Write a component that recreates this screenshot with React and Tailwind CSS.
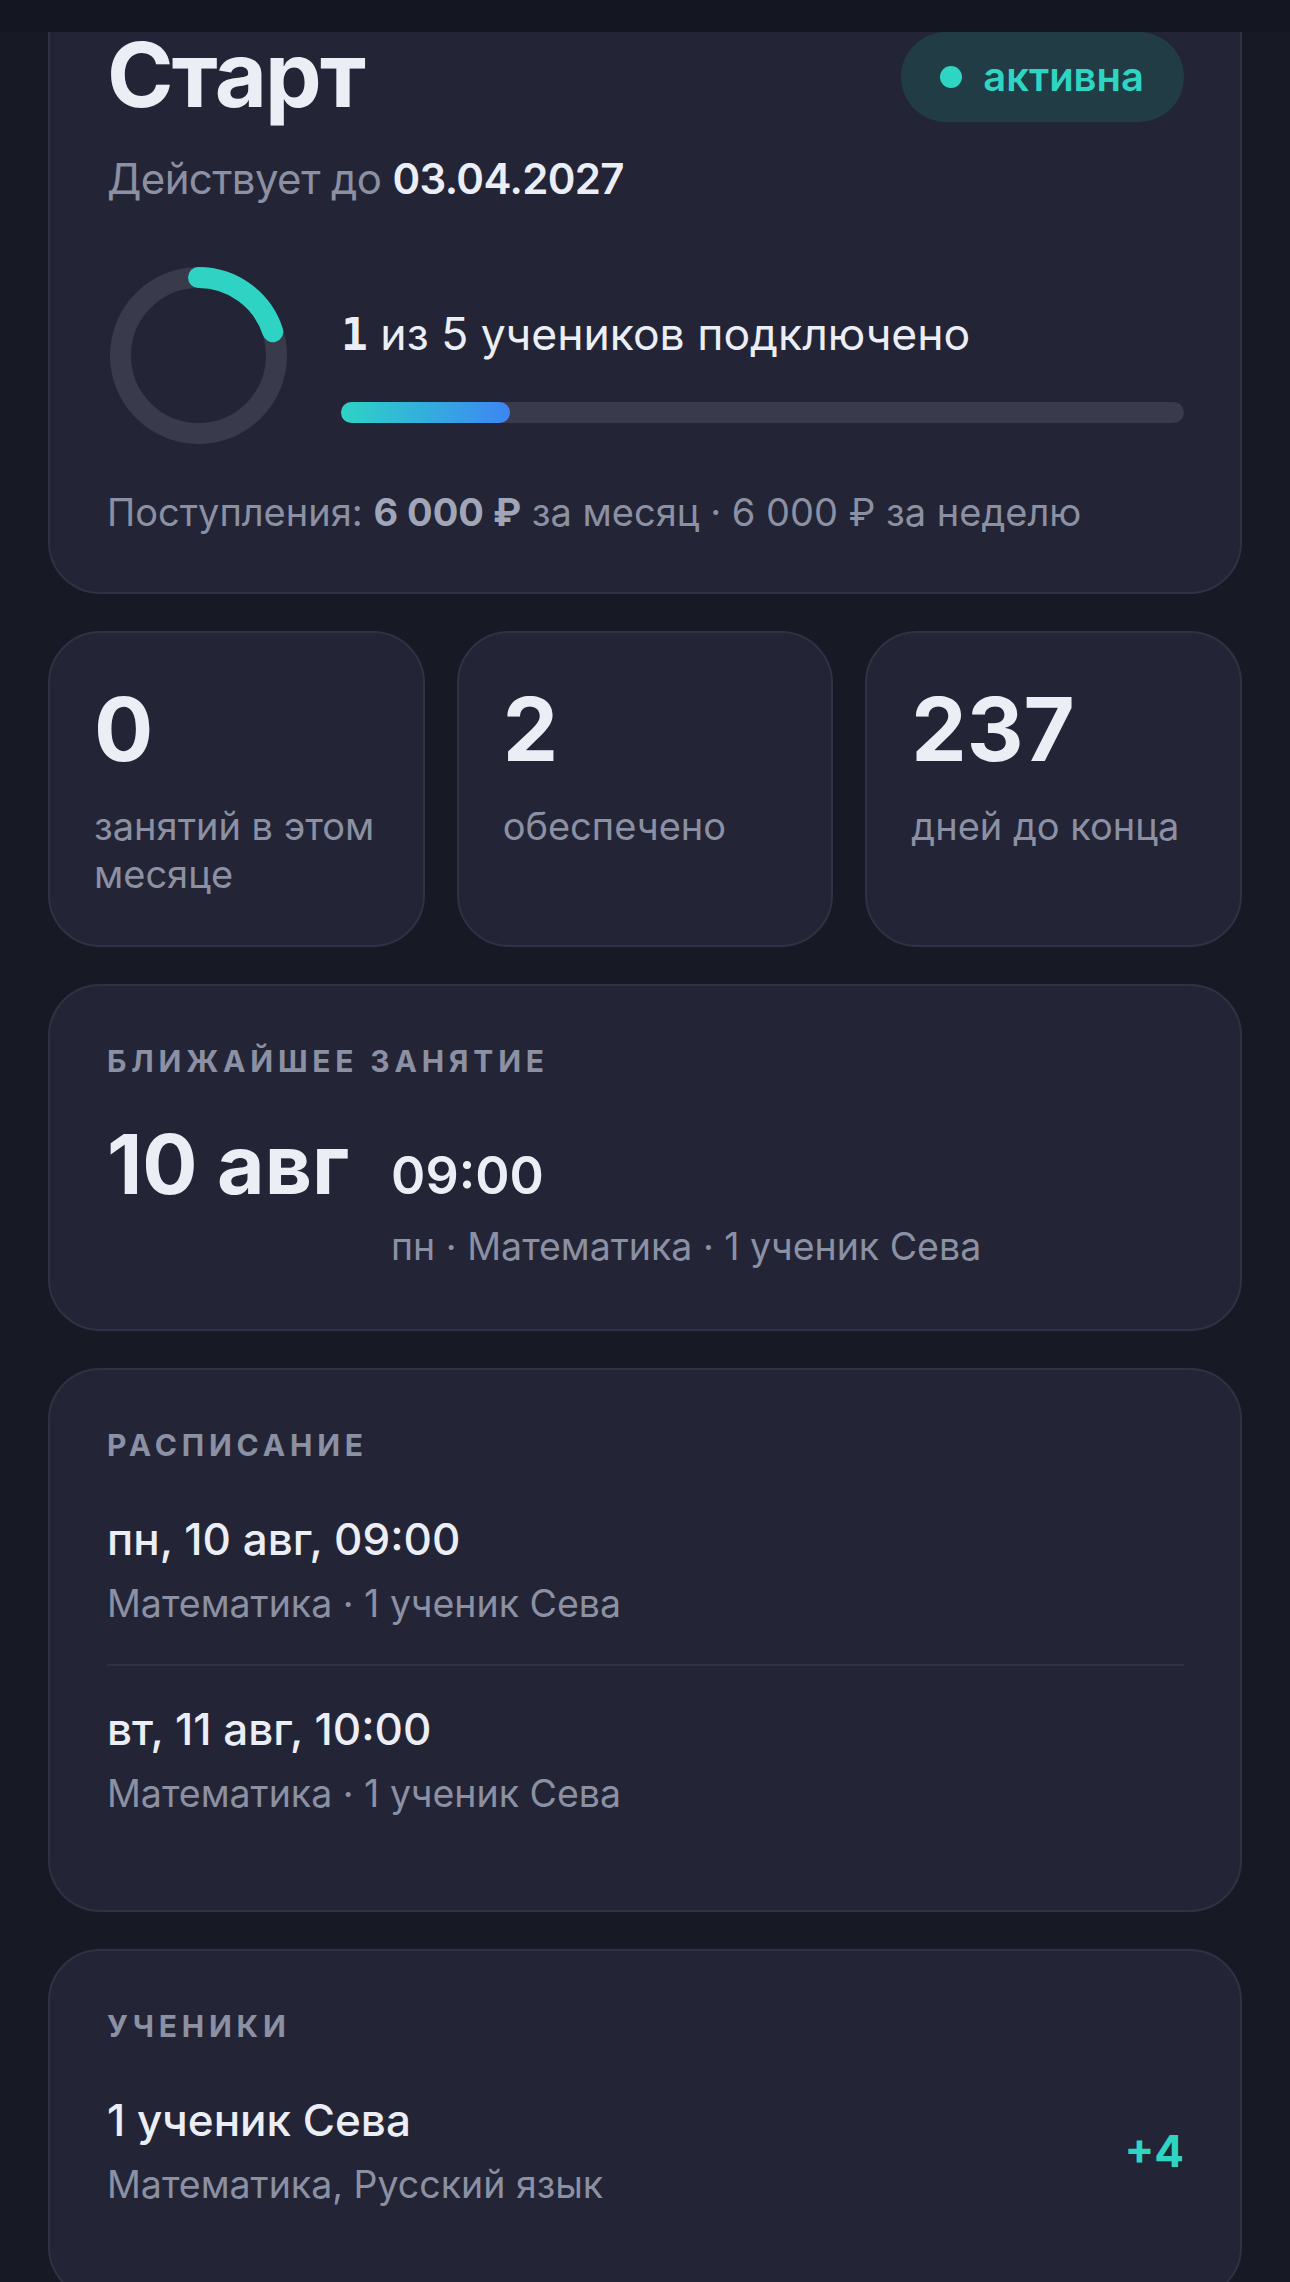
const card = 'rounded-[52px] border-2 border-[#2f3245] bg-[#232536]';
const muted = 'text-[#8b90a3]';

const Ring = () => {
  const r = 78;
  const c = 2 * Math.PI * r;
  return (
    <svg width="177" height="177" viewBox="0 0 177 177" className="ml-[3px] shrink-0">
      <circle cx="88.5" cy="88.5" r={r} fill="none" stroke="#393b4c" strokeWidth="21" />
      <circle
        cx="88.5"
        cy="88.5"
        r={r}
        fill="none"
        stroke="#2fd3c3"
        strokeWidth="21"
        strokeLinecap="round"
        strokeDasharray={`${c * 0.2} ${c}`}
        transform="rotate(-90 88.5 88.5)"
      />
    </svg>
  );
};

const SectionLabel = ({ children }) => (
  <div className={`text-[30px] font-bold uppercase leading-[36px] tracking-[0.16em] ${muted}`}>{children}</div>
);

const schedule = [
  { title: 'пн, 10 авг, 09:00', sub: 'Математика · 1 ученик Сева' },
  { title: 'вт, 11 авг, 10:00', sub: 'Математика · 1 ученик Сева' },
];

const stats = [
  { value: '0', label: 'занятий в этом месяце' },
  { value: '2', label: 'обеспечено' },
  { value: '237', label: 'дней до конца' },
];

export default function App() {
  return (
    <div className="relative h-[2282px] overflow-hidden bg-[#171a25] font-['Inter',sans-serif] text-[#eceef6]">
      <div className="absolute inset-x-0 top-0 z-10 h-[32px] bg-[#141722]"></div>

      <main className="-mt-[29px] flex flex-col gap-[37px] px-[48px]">
        {/* тариф */}
        <section className={`${card} pb-[55px] pl-[57px] pr-[56px] pt-[57px]`}>
          <div className="flex h-[90px] items-center justify-between">
            <h1 className="text-[90px] font-bold leading-[90px] tracking-[-0.02em]">Старт</h1>
            <span className="mt-[4px] flex h-[90px] items-center gap-[21px] rounded-full bg-[#213c44] pl-[39px] pr-[40px] text-[40px] font-semibold text-[#2fd5c3]">
              <span className="h-[22px] w-[22px] rounded-full bg-[#2fd5c3]"></span>
              активна
            </span>
          </div>

          <p className={`mt-[30px] text-[42px] leading-[57px] tracking-[-0.015em] ${muted}`}>
            Действует до <span className="font-semibold text-[#eceef6]">03.04.2027</span>
          </p>

          <div className="mt-[60px] flex items-start gap-[54px]">
            <Ring />
            <div className="mt-[37px] flex-1">
              <p className="text-[44.5px] leading-[60px]">
                <span className="font-['DejaVu_Sans_Mono',monospace] font-bold">1</span> из 5 учеников подключено
              </p>
              <div className="mt-[37px] h-[21px] rounded-full bg-[#393b4c]">
                <div className="h-full w-1/5 rounded-full bg-linear-to-r from-[#2fd3c3] to-[#3e84f3]"></div>
              </div>
            </div>
          </div>

          <p className={`mt-[44px] text-[38px] leading-[49px] ${muted}`}>
            Поступления: <span className="font-bold text-[#a0a5b7]">6 000 ₽</span> за месяц · 6 000 ₽ за неделю
          </p>
        </section>

        {/* счётчики */}
        <div className="grid grid-cols-3 gap-[32px]">
          {stats.map((s) => (
            <div key={s.value} className={`${card} px-[44px] pb-[47px] pt-[44px]`}>
              <div className="text-[88px] font-bold leading-[1.2]">{s.value}</div>
              <div className={`mt-[19px] text-[38px] leading-[48px] ${muted}`}>{s.label}</div>
            </div>
          ))}
        </div>

        {/* ближайшее */}
        <section className={`${card} pb-[58px] pl-[57px] pr-[56px] pt-[57px]`}>
          <SectionLabel>Ближайшее занятие</SectionLabel>
          <div className="mt-[45px] flex items-baseline gap-[42px]">
            <div className="text-[82px] font-bold leading-none">10 авг</div>
            <div>
              <div className="text-[52px] font-semibold leading-none">09:00</div>
              <div className={`mt-[20px] text-[37.5px] leading-[49px] ${muted}`}>пн · Математика · 1 ученик Сева</div>
            </div>
          </div>
        </section>

        {/* расписание */}
        <section className={`${card} pb-[56px] pl-[57px] pr-[56px] pt-[57px]`}>
          <SectionLabel>Расписание</SectionLabel>
          <ul className="mt-[13px]">
            {schedule.map((item) => (
              <li key={item.title} className="border-b-2 border-[#2f3245] py-[36px] last:border-b-0">
                <div className="text-[44px] font-medium leading-[55px]">{item.title}</div>
                <div className={`mt-[12px] text-[37.5px] leading-[49px] ${muted}`}>{item.sub}</div>
              </li>
            ))}
          </ul>
        </section>

        {/* ученики */}
        <section className={`${card} pb-[52px] pl-[57px] pr-[56px] pt-[57px]`}>
          <SectionLabel>Ученики</SectionLabel>
          <div className="mt-[13px] flex items-center justify-between py-[36px]">
            <div>
              <div className="text-[44px] font-medium leading-[55px]">1 ученик Сева</div>
              <div className={`mt-[12px] text-[37.5px] leading-[49px] ${muted}`}>Математика, Русский язык</div>
            </div>
            <div className="text-[44px] font-bold text-[#2fd5c3]">+4</div>
          </div>
        </section>
      </main>
    </div>
  );
}
